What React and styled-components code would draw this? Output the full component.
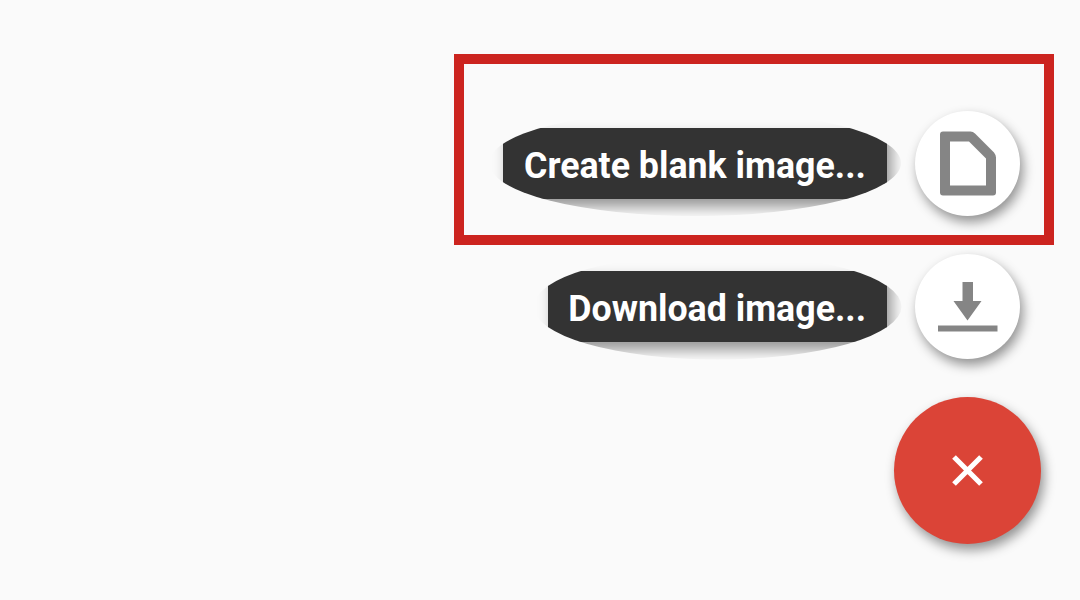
import React from 'react';
import styled, { createGlobalStyle } from 'styled-components';

const actions = [
  { id: 'create', label: 'Create blank image...', width: 384, radius: 206, highlighted: true },
  { id: 'download', label: 'Download image...', width: 339, radius: 184 },
];

const FileIcon = () => (
  <svg width="56" height="65" viewBox="0 -0.5 56 65">
    <path
      d="M3 0H30.500Q33 0 35 2L54 21Q56 23.500 56 26V61Q56 64 53 64H3Q0 64 0 61V3Q0 0 3 0ZM10 10V54H46V27L29 10Z"
      fill="#858585"
      fillRule="evenodd"
    />
  </svg>
);

const DownloadIcon = () => (
  <svg width="60" height="50" viewBox="0 0 60 50">
    <path d="M24.500 0H35V19H43.500L29.500 38.500L15.500 19H24.500ZM0 43.500H59.500V49.500H0Z" fill="#858585" />
  </svg>
);

const CloseIcon = () => (
  <svg width="33" height="32" viewBox="0 0 33 32">
    <path d="M3 2L30 29M30 2L3 29" stroke="#fff" strokeWidth="5.2" />
  </svg>
);

const icons = { create: FileIcon, download: DownloadIcon };

const App = () => {
  return (
    <>
      <GlobalStyle />
      <Page>
        {actions.map(({ id, label, width, radius, highlighted }) => {
          const Icon = icons[id];
          return (
            <ActionRow key={id} $highlighted={highlighted}>
              <Label $width={width} $radius={radius}>
                <span>{label}</span>
              </Label>
              <MiniButton aria-label={label} $id={id}>
                <Icon />
              </MiniButton>
            </ActionRow>
          );
        })}
        <MainButton aria-label="Close">
          <CloseIcon />
        </MainButton>
      </Page>
    </>
  );
};

export default App;

const GlobalStyle = createGlobalStyle`
  * {
    box-sizing: border-box;
  }

  body {
    margin: 0;
    background: #fafafa;
    font-family: Roboto, sans-serif;
  }
`;

const Page = styled.main`
  display: flex;
  flex-direction: column;
  align-items: flex-end;
  height: 600px;
  padding: 54px 26px 0 0;
  overflow: hidden;
`;

const ActionRow = styled.div`
  display: flex;
  align-items: center;
  justify-content: flex-end;
  gap: 28px;
  width: 600px;
  height: ${(props) => (props.$highlighted ? '191px' : '105px')};
  margin-top: ${(props) => (props.$highlighted ? '0' : '9px')};
  padding: ${(props) => (props.$highlighted ? '27px 24px 0 0' : '0 34px 0 0')};
  border: ${(props) => (props.$highlighted ? '10px solid #cc241f' : 'none')};
`;

const Label = styled.div`
  display: flex;
  align-items: center;
  justify-content: center;
  width: ${(props) => props.$width}px;
  height: 71px;
  background: #333;
  color: #fff;
  font-size: 37px;
  font-weight: 700;
  line-height: 1;
  white-space: nowrap;
  box-shadow: 5px 8px 13px rgba(0, 0, 0, 0.4);
  clip-path: ellipse(${(props) => props.$radius}px 53px at 50% 35.5px);

  span {
    margin-top: 4px;
    transform: scaleX(0.966);
  }
`;

const RoundButton = styled.button`
  display: flex;
  align-items: center;
  justify-content: center;
  flex-shrink: 0;
  padding: 0;
  border: none;
  border-radius: 50%;
  box-shadow: 3px 6px 12px rgba(0, 0, 0, 0.42);
`;

const MiniButton = styled(RoundButton)`
  width: 105px;
  height: 105px;
  padding-top: ${(props) => (props.$id === 'download' ? '1px' : '0')};
  background: #fff;
`;

const MainButton = styled(RoundButton)`
  width: 147px;
  height: 147px;
  margin: 38px 13px 0 0;
  background: #db4437;
`;
